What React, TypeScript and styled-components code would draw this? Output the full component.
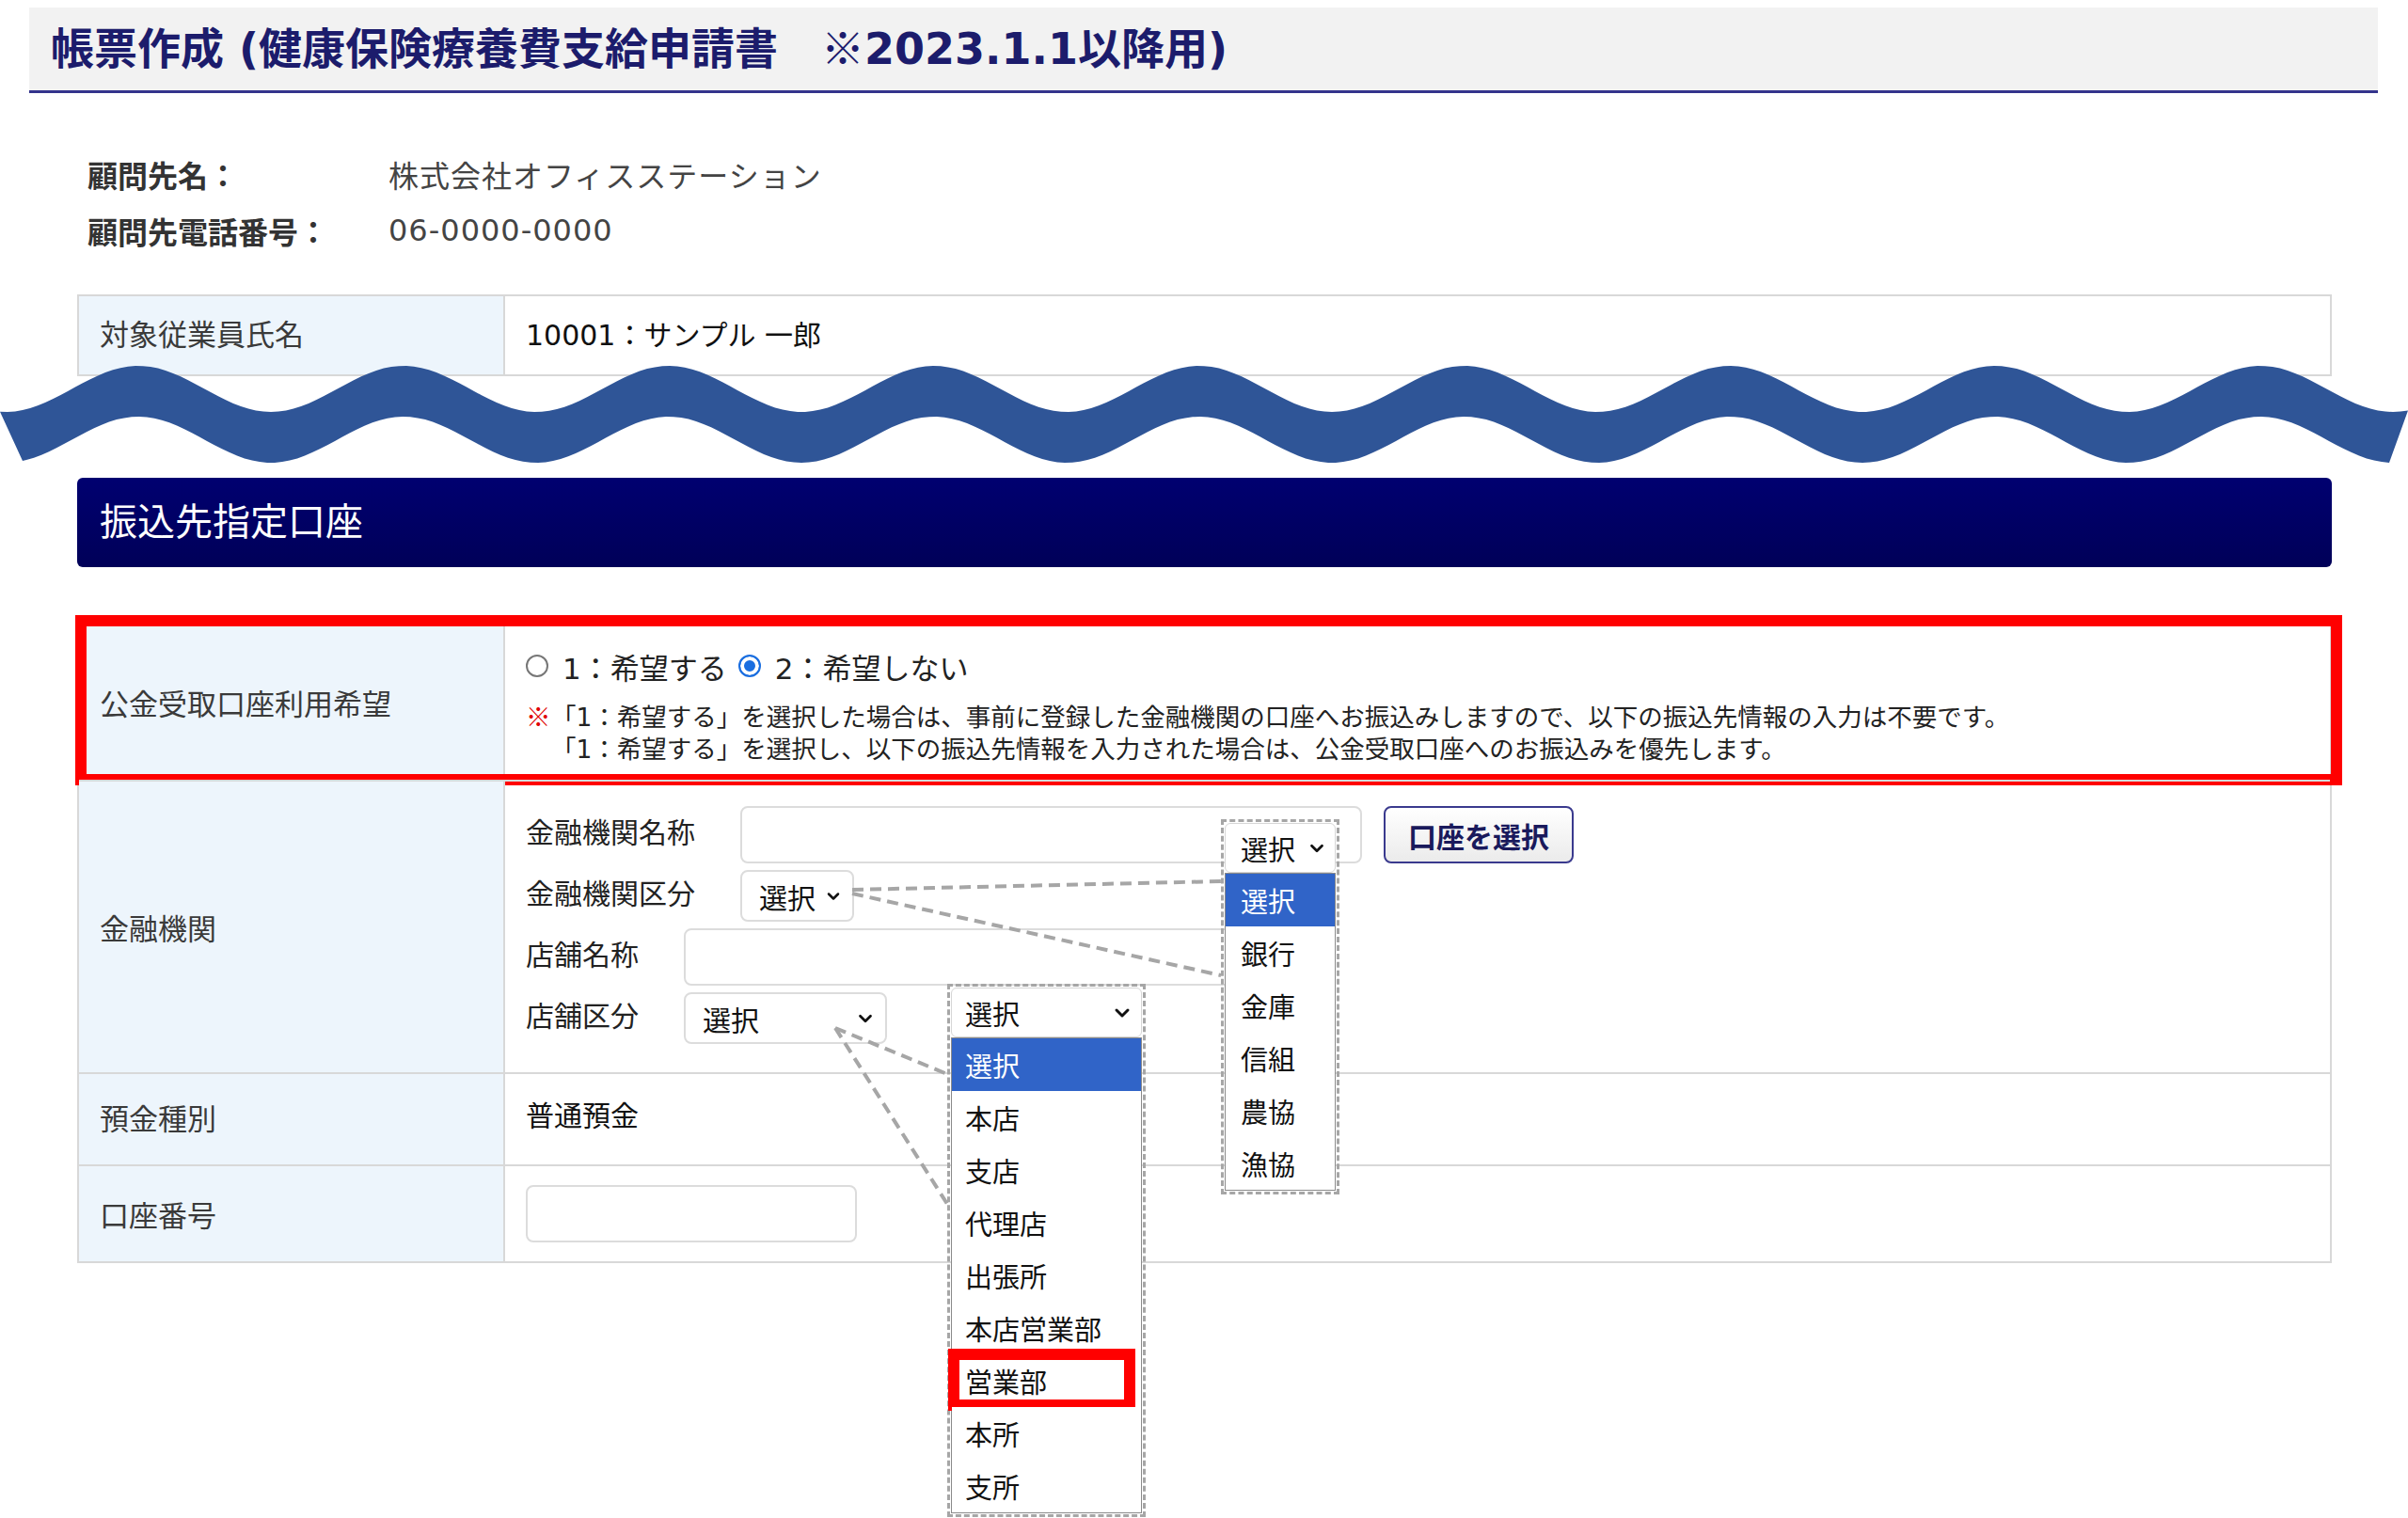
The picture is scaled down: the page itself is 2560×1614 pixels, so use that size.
import React from "react";
import styled, { createGlobalStyle } from "styled-components";
import { ChevronDown } from "lucide-react";

const GlobalStyle = createGlobalStyle`
  html, body {
    margin: 0;
    padding: 0;
    background: #fff;
    overflow: hidden;
  }
  body {
    font-family: "DejaVu Sans", "Noto Sans CJK JP", sans-serif;
    color: #222;
  }
  * { box-sizing: border-box; }
`;

const Page = styled.div`
  position: relative;
  width: 2560px;
  height: 1614px;
  padding-top: 8px;
`;

const TitleBar = styled.div`
  display: flex;
  align-items: center;
  height: 91px;
  margin: 0 32px 0 31px;
  padding: 0 0 8px 23px;
  background: #f2f2f2;
  border-bottom: 3px solid #34348c;
`;

const Title = styled.h1`
  margin: 0;
  font-size: 46px;
  font-weight: 700;
  color: #1c1c6c;
`;

const Cjk = styled.span`
  font-family: "Noto Sans CJK JP", sans-serif;
`;

const Column = styled.div`
  margin: 0 81px 0 82px;
`;

const Info = styled.div`
  display: grid;
  grid-template-columns: 320px 1fr;
  grid-auto-rows: 60px;
  align-items: center;
  margin: 56px 0 38px;
  padding-left: 11px;
  font-size: 32px;
`;

const InfoLabel = styled.div`
  font-weight: 700;
  color: #333;
`;

const InfoValue = styled.div`
  color: #444;
  letter-spacing: 1px;
`;

const Table = styled.div`
  border: 2px solid #d8d8d8;
`;

const Row = styled.div<{ $h: number; $marked?: boolean }>`
  position: relative;
  display: grid;
  grid-template-columns: 453px 1fr;
  min-height: ${p => p.$h}px;
  & + & { border-top: 2px solid #d8d8d8; }
  ${p => p.$marked && `
    &::after {
      content: "";
      position: absolute;
      top: -9px;
      left: -4px;
      right: -13px;
      bottom: -6px;
      border: 12px solid #ff0000;
      pointer-events: none;
    }
  `}
`;

const Label = styled.div<{ $pb?: number }>`
  display: flex;
  align-items: center;
  padding: 0 0 ${p => p.$pb || 0}px 22px;
  background: #edf5fc;
  border-right: 2px solid #d8d8d8;
  font-size: 31px;
  color: #3a3a3a;
`;

const Cell = styled.div<{ $pad?: string }>`
  display: flex;
  flex-direction: column;
  justify-content: center;
  padding: ${p => p.$pad || "0 22px"};
  font-size: 30px;
  color: #111;
`;

const WaveBreak = styled.div`
  position: relative;
  height: 108px;
`;

const WaveSvg = styled.svg`
  position: absolute;
  top: -20px;
  left: 0;
  width: 2560px;
  height: 120px;
`;

const SectionHeader = styled.div`
  display: flex;
  align-items: center;
  height: 95px;
  margin-bottom: 58px;
  padding: 0 0 8px 24px;
  border-radius: 6px;
  background: linear-gradient(#000070, #000058);
  color: #fff;
  font-size: 40px;
`;

const RadioGroup = styled.div`
  display: flex;
  align-items: center;
  gap: 12px;
  height: 42px;
  font-size: 31px;
  color: #222;
`;

const RadioOption = styled.label`
  display: flex;
  align-items: center;
  gap: 15px;
`;

const Radio = styled.span<{ $checked?: boolean }>`
  width: 24px;
  height: 24px;
  border-radius: 50%;
  border: 2px solid ${p => (p.$checked ? "#1a6ee0" : "#777")};
  background: ${p => (p.$checked ? "#1a6ee0" : "#fff")};
  box-shadow: ${p => (p.$checked ? "inset 0 0 0 4px #fff" : "none")};
`;

const Note = styled.p`
  margin: 15px 0 0;
  padding-left: 27px;
  text-indent: -27px;
  font-size: 26.5px;
  line-height: 34px;
  color: #222;
`;

const Mark = styled.span`
  display: inline-block;
  width: 27px;
  text-indent: 0;
  color: #e00000;
  font-family: "Noto Sans CJK JP", sans-serif;
`;

const FieldStack = styled.div`
  display: flex;
  flex-direction: column;
  gap: 7px;
`;

const FieldLine = styled.div`
  display: flex;
  align-items: center;
  gap: 48px;
`;

const FieldName = styled.span`
  padding-bottom: 9px;
  font-size: 30px;
  color: #222;
`;

const Controls = styled.div`
  display: flex;
  align-items: center;
  gap: 23px;
`;

const TextBox = styled.div<{ $w: number }>`
  width: ${p => p.$w}px;
  height: 61px;
  border: 2px solid #dcdcdc;
  border-radius: 8px;
  background: #fff;
`;

const SelectBox = styled.div<{ $w: number }>`
  display: flex;
  align-items: center;
  justify-content: space-between;
  width: ${p => p.$w}px;
  height: 55px;
  padding: 0 10px 0 18px;
  border: 2px solid #dcdcdc;
  border-radius: 8px;
  background: #fff;
  font-size: 30px;
  color: #111;
`;

const PickButton = styled.button`
  height: 61px;
  padding: 0 24px;
  border: 2px solid #3a3a8e;
  border-radius: 8px;
  background: linear-gradient(#ffffff, #ebebeb);
  font-family: "Noto Sans CJK JP", sans-serif;
  font-size: 30px;
  font-weight: 700;
  color: #1a1a5c;
`;

const Connectors = styled.svg`
  position: absolute;
  top: 0;
  left: 0;
  width: 2560px;
  height: 1614px;
  pointer-events: none;
  z-index: 4;
`;

const Dropdown = styled.div<{ $left: number; $top: number; $w: number }>`
  position: absolute;
  left: ${p => p.$left}px;
  top: ${p => p.$top}px;
  width: ${p => p.$w}px;
  padding: 1px;
  border: 3px dashed #a6a6a6;
  z-index: 5;
`;

const MenuSelect = styled.div<{ $pl: number }>`
  display: flex;
  align-items: center;
  justify-content: space-between;
  height: 53px;
  padding: 0 8px 0 ${p => p.$pl}px;
  border: 1px solid #d6d6d6;
  border-radius: 6px;
  background: #fff;
  font-size: 29px;
  color: #111;
`;

const MenuList = styled.div`
  border: 1px solid #8a8a8a;
  background: #fff;
`;

const MenuItem = styled.div<{ $active?: boolean; $marked?: boolean; $pl: number }>`
  position: relative;
  display: flex;
  align-items: center;
  height: 56px;
  padding-left: ${p => p.$pl}px;
  font-size: 29px;
  background: ${p => (p.$active ? "#3064c8" : "#fff")};
  color: ${p => (p.$active ? "#fff" : "#111")};
  ${p => p.$marked && `
    &::after {
      content: "";
      position: absolute;
      top: -6px;
      left: -4px;
      right: 6px;
      bottom: -4px;
      border: 12px solid #ff0000;
    }
  `}
`;

const wavePath = () => {
  const c = (x: number) => 60.5 - 24.5 * Math.cos((2 * Math.PI * (x - 147)) / 282);
  const pts: string[] = [];
  for (let x = 0; x <= 2560; x += 8) pts.push(`${x},${(c(x) - 27).toFixed(1)}`);
  for (let x = 2540; x >= 24; x -= 8) pts.push(`${x},${(c(x) + 27).toFixed(1)}`);
  pts.push(`24,${(c(24) + 27).toFixed(1)}`);
  return `M${pts.join(" L")} Z`;
};

const bankKinds = ["選択", "銀行", "金庫", "信組", "農協", "漁協"];
const branchKinds = ["選択", "本店", "支店", "代理店", "出張所", "本店営業部", "営業部", "本所", "支所"];

export default function App() {
  return (
    <Page>
      <GlobalStyle />
      <TitleBar>
        <Title>帳票作成 (健康保険療養費支給申請書　<Cjk>※</Cjk>2023.1.1以降用)</Title>
      </TitleBar>

      <Column>
        <Info>
          <InfoLabel>顧問先名：</InfoLabel>
          <InfoValue>株式会社オフィスステーション</InfoValue>
          <InfoLabel>顧問先電話番号：</InfoLabel>
          <InfoValue>06-0000-0000</InfoValue>
        </Info>
        <Table>
          <Row $h={83}>
            <Label $pb={6}>対象従業員氏名</Label>
            <Cell $pad="0 22px 6px">10001：サンプル 一郎</Cell>
          </Row>
        </Table>
      </Column>

      <WaveBreak>
        <WaveSvg viewBox="0 0 2560 120">
          <path d={wavePath()} fill="#2f5597" />
        </WaveSvg>
      </WaveBreak>

      <Column>
        <SectionHeader>振込先指定口座</SectionHeader>
        <Table>
          <Row $h={164} $marked>
            <Label>公金受取口座利用希望</Label>
            <Cell $pad="24px 22px 15px">
              <RadioGroup>
                <RadioOption><Radio />1：希望する</RadioOption>
                <RadioOption><Radio $checked />2：希望しない</RadioOption>
              </RadioGroup>
              <Note>
                <Mark>※</Mark>「1：希望する」を選択した場合は、事前に登録した金融機関の口座へお振込みしますので、以下の振込先情報の入力は不要です。
                <br />「1：希望する」を選択し、以下の振込先情報を入力された場合は、公金受取口座へのお振込みを優先します。
              </Note>
            </Cell>
          </Row>
          <Row $h={309}>
            <Label>金融機関</Label>
            <Cell $pad="26px 22px 30px">
              <FieldStack>
                <FieldLine>
                  <FieldName>金融機関名称</FieldName>
                  <Controls>
                    <TextBox $w={661} />
                    <PickButton>口座を選択</PickButton>
                  </Controls>
                </FieldLine>
                <FieldLine>
                  <FieldName>金融機関区分</FieldName>
                  <SelectBox $w={121}>選択<ChevronDown size={20} strokeWidth={3} /></SelectBox>
                </FieldLine>
                <FieldLine>
                  <FieldName>店舗名称</FieldName>
                  <TextBox $w={600} />
                </FieldLine>
                <FieldLine>
                  <FieldName>店舗区分</FieldName>
                  <SelectBox $w={216}>選択<ChevronDown size={22} strokeWidth={3} /></SelectBox>
                </FieldLine>
              </FieldStack>
            </Cell>
          </Row>
          <Row $h={98}>
            <Label $pb={6}>預金種別</Label>
            <Cell $pad="0 22px 12px">普通預金</Cell>
          </Row>
          <Row $h={103}>
            <Label>口座番号</Label>
            <Cell>
              <TextBox $w={352} />
            </Cell>
          </Row>
        </Table>
      </Column>

      <Connectors viewBox="0 0 2560 1614">
        <g stroke="#a6a6a6" strokeWidth={4} strokeDasharray="12 7" fill="none">
          <line x1={906} y1={946} x2={1298} y2={937} />
          <line x1={906} y1={950} x2={1298} y2={1037} />
          <line x1={888} y1={1093} x2={1007} y2={1142} />
          <line x1={888} y1={1093} x2={1007} y2={1280} />
        </g>
      </Connectors>

      <Dropdown $left={1298} $top={871} $w={126}>
        <MenuSelect $pl={16}>選択<ChevronDown size={22} strokeWidth={3} /></MenuSelect>
        <MenuList>
          {bankKinds.map((k, i) => (
            <MenuItem key={k} $pl={16} $active={i === 0}>{k}</MenuItem>
          ))}
        </MenuList>
      </Dropdown>

      <Dropdown $left={1007} $top={1046} $w={211}>
        <MenuSelect $pl={14}>選択<ChevronDown size={24} strokeWidth={3} /></MenuSelect>
        <MenuList>
          {branchKinds.map((k, i) => (
            <MenuItem key={k} $pl={14} $active={i === 0} $marked={k === "営業部"}>{k}</MenuItem>
          ))}
        </MenuList>
      </Dropdown>
    </Page>
  );
}
